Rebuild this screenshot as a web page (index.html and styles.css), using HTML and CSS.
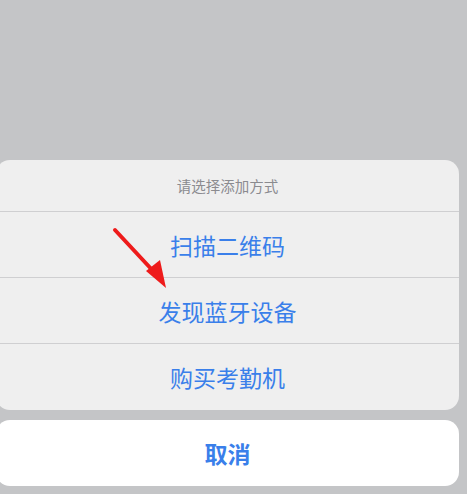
FILE: index.html
```html
<!DOCTYPE html>
<html lang="zh">
<head>
<meta charset="utf-8">
<link rel="stylesheet" href="styles.css">
</head>
<body>
<div class="screen">
  <div class="sheet">
    <div class="title">请选择添加方式</div>
    <div class="option">扫描二维码</div>
    <div class="option">发现蓝牙设备</div>
    <div class="option">购买考勤机</div>
  </div>
  <div class="cancel">取消</div>
  <svg class="arrow" width="467" height="494" viewBox="0 0 467 494">
    <line x1="115" y1="230" x2="155" y2="273" stroke="#ee1b1b" stroke-width="4" stroke-linecap="round"/>
    <polygon points="166,288 146,271 160,260" fill="#ee1b1b"/>
  </svg>
</div>
</body>
</html>
```
FILE: styles.css
```css
html, body {
  margin: 0;
  padding: 0;
}
body {
  background: #c4c5c7;
  font-family: "Noto Sans CJK SC", "Noto Sans", sans-serif;
  width: 467px;
  height: 494px;
  overflow: hidden;
}
.screen {
  position: relative;
  width: 467px;
  height: 494px;
  padding-top: 160px;
  box-sizing: border-box;
  display: flex;
  flex-direction: column;
  gap: 10px;
}
.sheet {
  margin-left: -4px;
  width: 463px;
  background: #efefef;
  border-radius: 14px;
  display: flex;
  flex-direction: column;
}
.title {
  box-sizing: border-box;
  height: 52px;
  display: flex;
  align-items: center;
  justify-content: center;
  font-size: 14.5px;
  color: #8b8b8f;
  border-bottom: 1px solid #cfcfd1;
}
.option {
  box-sizing: border-box;
  height: 66px;
  display: flex;
  align-items: center;
  justify-content: center;
  font-size: 23px;
  color: #3a7fea;
  border-bottom: 1px solid #cfcfd1;
}
.option:first-of-type {
  height: 67px;
}
.option:last-child {
  border-bottom: none;
}
.cancel {
  margin-left: -4px;
  width: 463px;
  height: 66px;
  background: #ffffff;
  border-radius: 14px;
  display: flex;
  align-items: center;
  justify-content: center;
  font-size: 23px;
  font-weight: bold;
  color: #3a7fea;
}
.arrow {
  position: absolute;
  left: 0;
  top: 0;
  pointer-events: none;
}
```
